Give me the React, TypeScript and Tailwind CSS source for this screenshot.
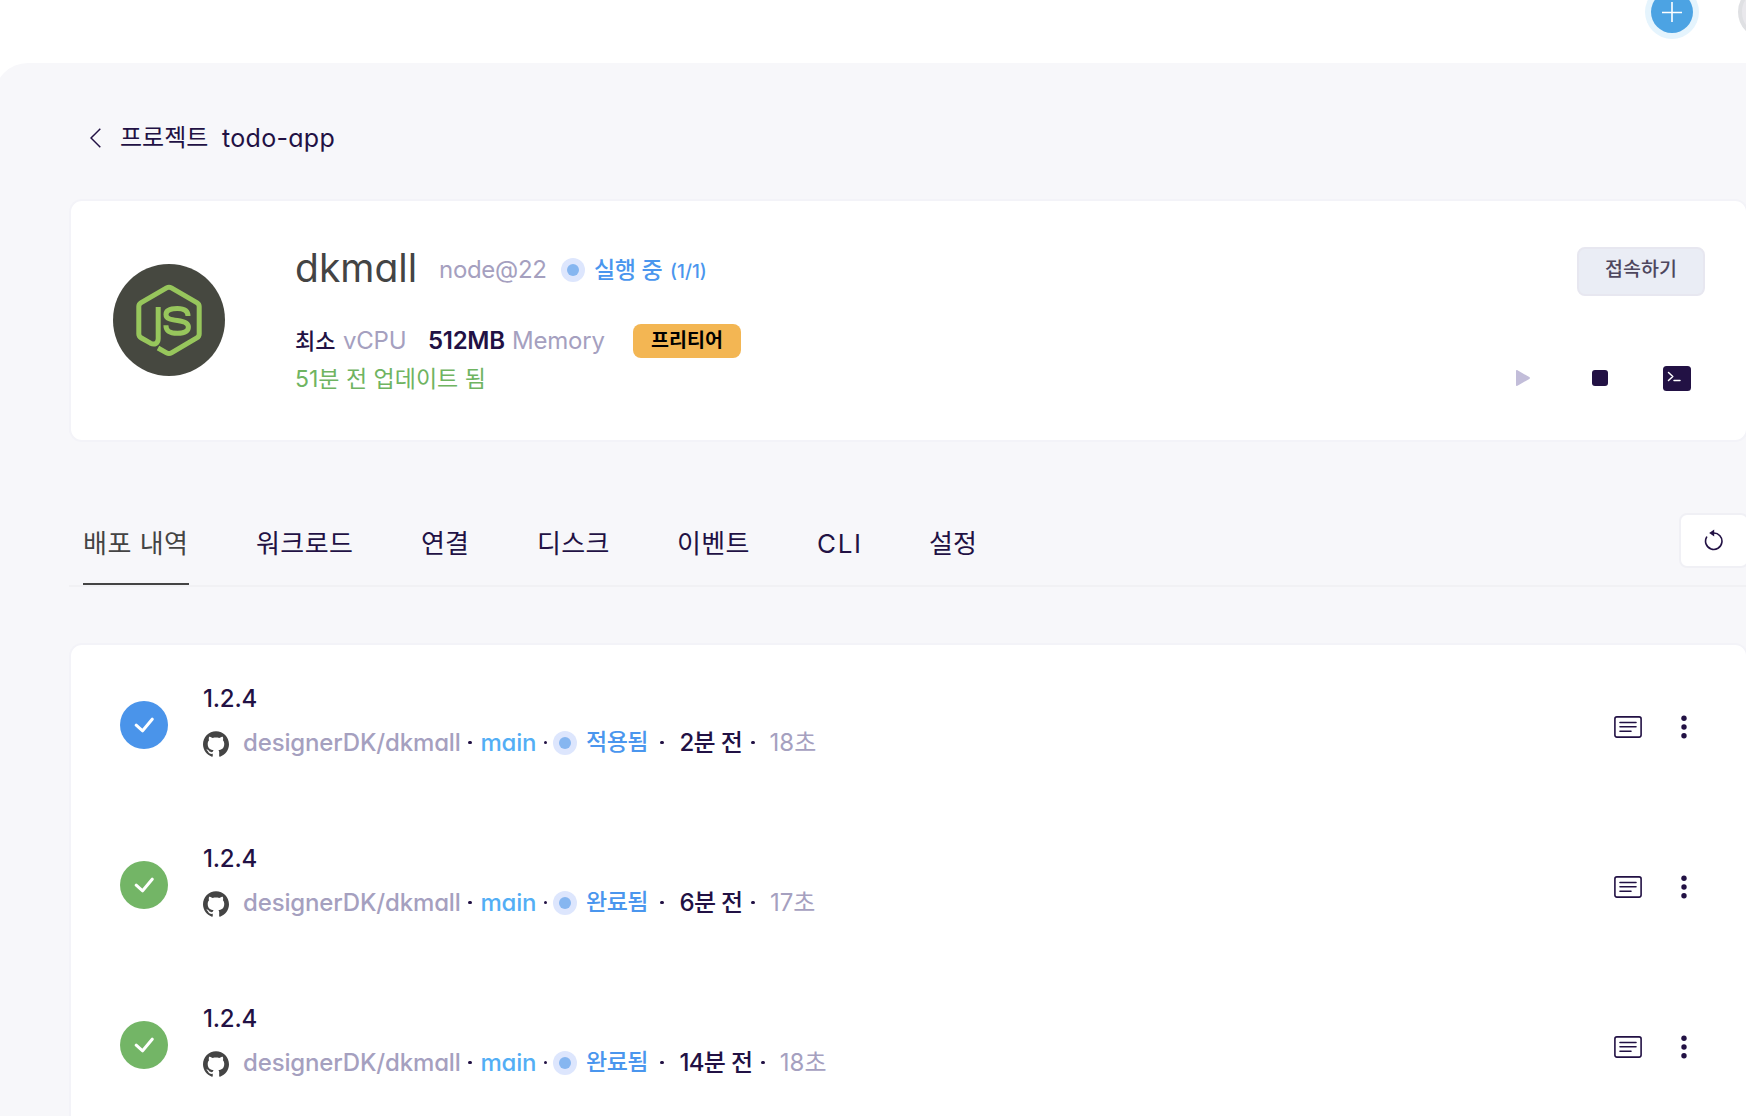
import React from 'react';
import { SiGithub } from 'react-icons/si';

interface Deployment {
    version: string;
    repo: string;
    branch: string;
    status: string;
    applied: boolean;
    ago: string;
    duration: string;
}

const deployments: Deployment[] = [
    { version: '1.2.4', repo: 'designerDK/dkmall', branch: 'main', status: '적용됨', applied: true, ago: '2분 전', duration: '18초' },
    { version: '1.2.4', repo: 'designerDK/dkmall', branch: 'main', status: '완료됨', applied: false, ago: '6분 전', duration: '17초' },
    { version: '1.2.4', repo: 'designerDK/dkmall', branch: 'main', status: '완료됨', applied: false, ago: '14분 전', duration: '18초' },
];

const tabs = [
    { label: '배포 내역', width: 'w-[106px] tracking-[0.5px]' },
    { label: '워크로드', width: 'w-[98px] tracking-[0.4px]' },
    { label: '연결', width: 'w-[49px]' },
    { label: '디스크', width: 'w-[73px] tracking-[0.3px]' },
    { label: '이벤트', width: 'w-[73px] tracking-[0.3px]' },
    { label: 'CLI', width: 'w-[45px] tracking-[1.7px]' },
    { label: '설정', width: 'w-[49px]' },
];

const NodeLogo = () => (
    <svg className="size-28 shrink-0" viewBox="0 0 112 112" fill="none">
        <circle cx="56" cy="56" r="56" fill="#464840" />
        <g stroke="#97c65c" strokeWidth="5">
            <path d="M45.2 43V74.5C45.2 79.5 41.5 81.2 37.5 79.2L28.4 74Q25.8 72.5 25.8 70V42.5Q25.8 40 28.2 38.6L53.6 23.9Q56 22.6 58.4 23.9L83.8 38.6Q86.2 40 86.2 42.5V70Q86.2 72.5 83.8 73.9L58.4 88.8Q56 90.2 53.6 88.8L45 84" strokeLinejoin="round" />
            <path d="M75 52C75 46.3 71 44.4 64.4 44.4C57 44.4 53 46.4 53 50.4C53 54.8 57.6 55.6 64.4 56.4C71.4 57.2 75.4 58.6 75.4 63C75.4 67.4 71.4 69.3 64.4 69.3C57 69.3 53 67.2 52.9 61.2" />
        </g>
    </svg>
);

const StatusDot = () => (
    <span className="flex size-6 shrink-0 items-center justify-center rounded-full bg-[#dde6fd]">
        <span className="size-3 rounded-full bg-[#86b6f0]" />
    </span>
);

const Dot = ({ className = '' }: { className?: string }) => (
    <span className={`size-[3.5px] shrink-0 rounded-full bg-[#221144] ${className}`} />
);

const TopBar = () => (
    <div className="flex h-[63px] items-start justify-end overflow-hidden">
        <div className="-mt-[15px] flex shrink-0 gap-[39px] -mr-[46px]">
            <button className="flex size-[54px] items-center justify-center rounded-full bg-[#e5f4fd]">
                <span className="flex size-[42px] items-center justify-center rounded-full bg-[#4ca3e3]">
                    <svg className="size-5" viewBox="0 0 20 20" stroke="#fff" strokeWidth="1.6">
                        <path d="M10 0V20M0 10.5H20" />
                    </svg>
                </span>
            </button>
            <div className="size-[54px] rounded-full border-4 border-[#dfe0e3] bg-[#e9e8ec]" />
        </div>
    </div>
);

const ServiceCard = () => (
    <section className="flex h-[243px] w-[1679px] rounded-[13px] border-2 border-[#f3f3f8] bg-white pl-[42px] pr-[41px]">
        <div className="flex items-center pb-[2px]">
            <NodeLogo />
        </div>
        <div className="ml-[70px] flex flex-col pt-[45px]">
            <div className="flex h-12 items-center leading-none">
                <h1 className="w-[144px] pb-[5px] text-[39px] text-[#444]">dkmall</h1>
                <span className="w-[122px] text-2xl tracking-[-0.3px] text-[#a5a0bf]">node@22</span>
                <StatusDot />
                <span className="ml-[9px] w-[76px] text-[23px] font-medium tracking-[-0.3px] text-[#4a96ee]">실행 중</span>
                <span className="mt-[3px] text-[19px] font-medium text-[#4a96ee]">(1/1)</span>
            </div>
            <div className="mt-[30px] flex h-[34px] items-center text-2xl leading-none text-[#a5a0bf]">
                <span className="w-[48px] text-[22px] font-medium text-[#221144]">최소</span>
                <span className="w-[85px] tracking-[-0.2px]">vCPU</span>
                <span className="w-[84px] font-semibold tracking-[-0.3px] text-[#221144]">512MB</span>
                <span className="w-[121px] tracking-[-0.2px]">Memory</span>
                <span className="flex h-[34px] w-[108px] items-center justify-center rounded-lg bg-[#f3b653] text-[19.5px] font-semibold text-black">프리티어</span>
            </div>
            <p className="mt-[8px] text-[23px] leading-[26px] text-[#6fb461]">51분 전 업데이트 됨</p>
        </div>
        <div className="ml-auto flex flex-col items-end pt-[46px]">
            <button className="h-[49px] w-[128px] rounded-lg border-2 border-[#e7e7f0] bg-[#eaedf5] pb-[3px] text-[19.5px] font-medium leading-none text-[#4e475e]">접속하기</button>
            <div className="mr-[14px] mt-[70px] flex h-6 items-center">
                <svg className="h-4 w-[14px]" viewBox="0 0 14 16" fill="#c2bdd9">
                    <path d="M0 1C0 .2.8-.2 1.5.2L13.3 7.1C14.2 7.6 14.2 8.4 13.3 8.9L1.5 15.8C.8 16.2 0 15.8 0 15Z" />
                </svg>
                <span className="ml-[62px] size-4 rounded-[3px] bg-[#221144]" />
                <svg className="ml-[55px] h-[25px] w-7" viewBox="0 0 28 25" fill="none">
                    <rect width="28" height="25" rx="3.5" fill="#221144" />
                    <path d="M5.5 6.5L9.8 10.5L5.5 14.5M11 14.4H17" stroke="#fff" strokeWidth="1.5" strokeLinecap="round" strokeLinejoin="round" />
                </svg>
            </div>
        </div>
    </section>
);

const TabBar = () => (
    <nav className="flex h-[74px] w-[1680px] border-b-2 border-[#f1f1f4] pl-[14px]">
        <div className="flex gap-[67px]">
            {tabs.map((tab, idx) => (
                <button
                    key={tab.label}
                    className={`${tab.width} h-[72px] whitespace-nowrap border-b-2 pb-[9px] text-left text-[26px] leading-none ${idx === 0 ? 'border-[#444] text-[#444]' : 'border-transparent text-[#221144]'}`}
                >
                    {tab.label}
                </button>
            ))}
        </div>
        <button className="ml-auto flex h-[55px] w-[70px] items-center justify-center rounded-lg border-2 border-[#f0f0f5] bg-white pb-[2px] pr-px">
            <svg className="h-[22px] w-5" viewBox="0 0 20 22" fill="none">
                <path d="M2.6 8.2A8.2 8.2 0 1 0 9.5 4" stroke="#221144" strokeWidth="1.6" strokeLinecap="round" />
                <path d="M5.2 4L10.2 .6V7.4Z" fill="#221144" />
            </svg>
        </button>
    </nav>
);

const DeploymentRow: React.FC<{ item: Deployment }> = ({ item }) => (
    <li className="flex h-40 items-center pl-[49px] pr-[59px]">
        <span className={`flex size-12 items-center justify-center rounded-full ${item.applied ? 'bg-[#4a94ea]' : 'bg-[#73b566]'}`}>
            <svg className="h-4 w-5" viewBox="0 0 20 16" fill="none">
                <path d="M2.2 8.2L8.6 13.8L18.2 2.2" stroke="#fff" strokeWidth="3" strokeLinecap="round" strokeLinejoin="round" />
            </svg>
        </span>
        <div className="ml-[35px] pb-[12px] leading-none">
            <p className="text-2xl font-medium tracking-[-0.2px] text-[#221144]">{item.version}</p>
            <div className="mt-[15px] flex h-[26px] items-center text-2xl font-medium">
                <SiGithub className="mr-[14px] mt-[3px] size-[26px] text-[#444]" />
                <span className="w-[225px] tracking-[-0.15px] text-[#a5a0bf]">{item.repo}</span>
                <Dot />
                <span className="ml-[9px] w-[63px] tracking-[-0.2px] text-[#53aef5]">{item.branch}</span>
                <Dot />
                <span className="ml-[6px] mt-px"><StatusDot /></span>
                <span className="ml-[9px] w-[74px] text-[23px] tracking-[-0.5px] text-[#4a96ee]">{item.status}</span>
                <Dot />
                <span className="ml-[16px] tracking-[-0.7px] text-[#221144]">{item.ago}</span>
                <Dot className="ml-[9px]" />
                <span className="ml-[15px] font-normal text-[#a5a0bf]">{item.duration}</span>
            </div>
        </div>
        <div className="ml-auto flex items-center gap-[39px] pt-[3px]">
            <svg className="h-[22px] w-7" viewBox="0 0 28 22" fill="none" stroke="#221144" strokeWidth="1.6" strokeLinecap="round">
                <rect x=".9" y=".9" width="26.2" height="20.2" rx="2" />
                <path d="M6 6.5H22M6 10.7H22M6 15.2H17" />
            </svg>
            <svg className="h-6 w-[6px]" viewBox="0 0 6 24" fill="#221144">
                <circle cx="3" cy="3.3" r="2.7" />
                <circle cx="3" cy="12" r="2.7" />
                <circle cx="3" cy="20.7" r="2.7" />
            </svg>
        </div>
    </li>
);

export default function App() {
    return (
        <div className="h-[1116px] w-[1746px] overflow-hidden bg-white font-['Inter','Noto_Sans_CJK_KR',sans-serif] [font-feature-settings:'cv11']">
            <TopBar />
            <main className="-ml-1.5 h-[1100px] w-[1800px] rounded-tl-[34px] bg-[#f7f7fa] pl-[75px]">
                <div className="flex h-[136px] items-center pl-[21px] pt-[14px] text-2xl leading-none text-[#221144]">
                    <svg className="h-5 w-[11px]" viewBox="0 0 11 20" fill="none">
                        <path d="M10.3 .7L1 10L10.3 19.3" stroke="#221144" strokeWidth="1.5" />
                    </svg>
                    <span className="ml-[19px] w-[102px]">프로젝트</span>
                    <span className="text-[25px] tracking-[0.3px]">todo-app</span>
                </div>
                <ServiceCard />
                <div className="h-[71px]" />
                <TabBar />
                <ul className="mt-[56px] h-[600px] w-[1679px] rounded-[13px] border-2 border-[#f3f3f8] bg-white">
                    {deployments.map((item, idx) => (
                        <DeploymentRow key={idx} item={item} />
                    ))}
                </ul>
            </main>
        </div>
    );
}
